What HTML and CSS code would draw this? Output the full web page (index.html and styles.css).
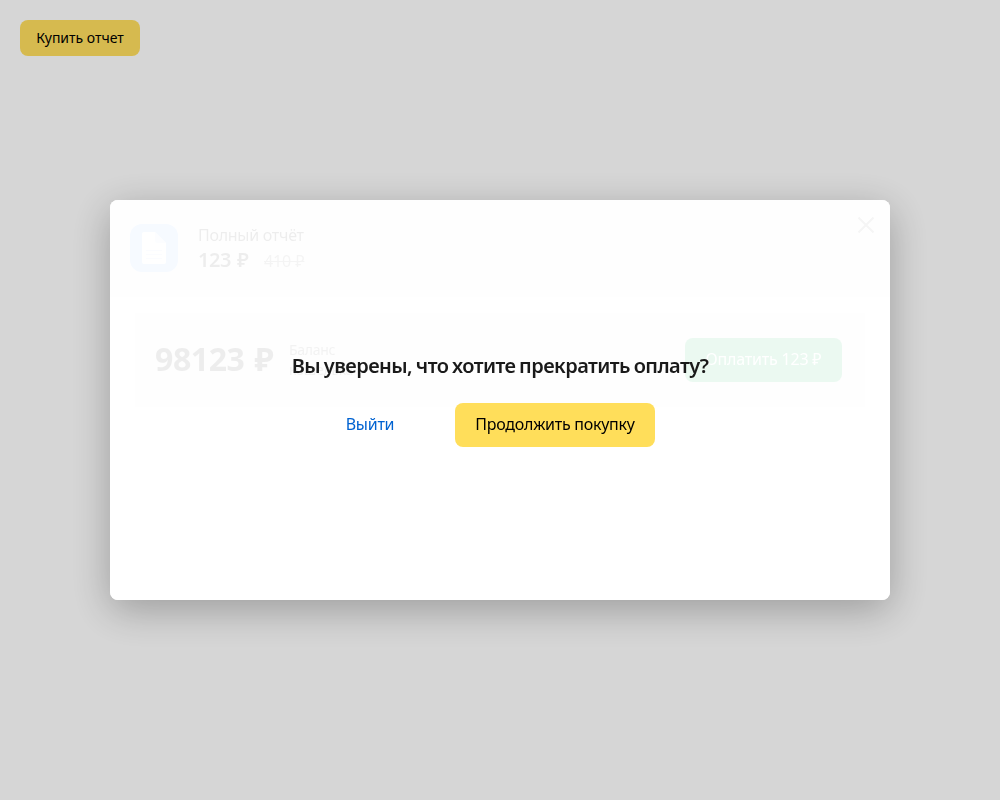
FILE: index.html
```
<!DOCTYPE html>
<html lang="ru">
<head>
<meta charset="utf-8">
<title>Купить отчет</title>
<link rel="stylesheet" href="styles.css">
</head>
<body>
<button class="open-button">Купить отчет</button>
<div class="backdrop">
  <section class="modal">
    <header class="header">
      <svg class="report-icon" width="48" height="48" viewBox="0 0 48 48">
        <rect width="48" height="48" rx="12" fill="#8abaff"/>
        <path d="M14 8h11l11 11v19a2 2 0 0 1-2 2H14a2 2 0 0 1-2-2V10a2 2 0 0 1 2-2z" fill="#fff"/>
        <path d="M25 8v9a2 2 0 0 0 2 2h9z" fill="#d4e4ff"/>
        <path d="M16 26.500h16M16 30.500h16M16 34.500h16" stroke="#c4d8ff"/>
      </svg>
      <div class="product">
        <div class="product-name">Полный отчёт</div>
        <div class="prices"><span class="price">123 ₽</span><span class="old-price">410 ₽</span></div>
      </div>
      <svg class="close" width="16" height="16" viewBox="0 0 16 16"><path d="M.5.500l15 15M15.500.500l-15 15" stroke="#808080" stroke-width="2"/></svg>
    </header>
    <div class="wallet">
      <span class="balance">98123 ₽</span>
      <span class="wallet-label">Баланс<br>кошелька</span>
      <button class="pay">Оплатить 123 ₽</button>
    </div>
    <div class="confirm">
      <h1 class="question">Вы уверены, что хотите прекратить оплату?</h1>
      <div class="actions">
        <button class="exit">Выйти</button>
        <button class="continue">Продолжить покупку</button>
      </div>
    </div>
  </section>
</div>
</body>
</html>
```
FILE: styles.css
```
* { box-sizing: border-box; }
body { margin: 0; padding: 20px; height: 800px; overflow: hidden; background: #fff; font-family: "Noto Sans", sans-serif; }
button { border: 0; padding: 0 0 2px; font-family: inherit; white-space: nowrap; }
.open-button { display: block; width: 120px; height: 36px; border-radius: 8px; background: #ffde5f; font-size: 14px; color: #000; }
.backdrop { position: fixed; inset: 0; display: flex; align-items: center; justify-content: center; background: rgba(0, 0, 0, .16); }
.modal { position: relative; width: 780px; height: 400px; border-radius: 8px; background: #fff; box-shadow: 0 10px 40px rgba(0, 0, 0, .28); overflow: hidden; }
.header { display: flex; height: 97px; padding: 23px 16px 0 20px; background: #f2f2f2; }
.report-icon { margin-top: 1px; }
.product { flex: 1; margin-left: 20px; color: #202020; }
.product-name { font-size: 16px; line-height: 24px; letter-spacing: -.27px; }
.prices { display: flex; align-items: baseline; line-height: 26px; }
.price { width: 50px; font-size: 20px; font-weight: 600; letter-spacing: -.5px; word-spacing: 1.500px; white-space: nowrap; }
.old-price { margin-left: 16px; font-size: 16px; letter-spacing: -.1px; color: #707070; text-decoration: line-through; }
.close { margin-top: -6px; }
.wallet { display: flex; align-items: center; width: 730px; height: 94px; margin: 16px 0 0 25px; padding: 0 23px 0 20px; background: #e8e8e8; color: #202020; }
.balance { width: 118px; padding-bottom: 3px; font-size: 32px; font-weight: 700; letter-spacing: -.4px; word-spacing: 2px; white-space: nowrap; }
.wallet-label { margin-left: 16px; font-size: 14px; line-height: 20px; letter-spacing: -.3px; color: #606060; }
.pay { width: 157px; height: 44px; margin-left: auto; border-radius: 8px; background: #00b14a; color: #fff; font-size: 16px; letter-spacing: -.2px; }
.confirm { position: absolute; inset: 0; display: flex; flex-direction: column; align-items: center; padding-top: 152px; background: rgba(255, 255, 255, .92); }
.question { margin: 0; font-size: 20px; line-height: 28px; font-weight: 600; letter-spacing: -.54px; word-spacing: -1px; color: #1a1a1a; white-space: nowrap; }
.actions { display: flex; gap: 40px; margin-top: 23px; padding-right: 20px; }
.exit, .continue { height: 44px; padding: 0 20px 2px; border-radius: 8px; font-size: 16px; letter-spacing: -.26px; }
.exit { width: 90px; background: none; color: #0062d1; }
.continue { width: 200px; background: #ffde5a; color: #000; }
```
